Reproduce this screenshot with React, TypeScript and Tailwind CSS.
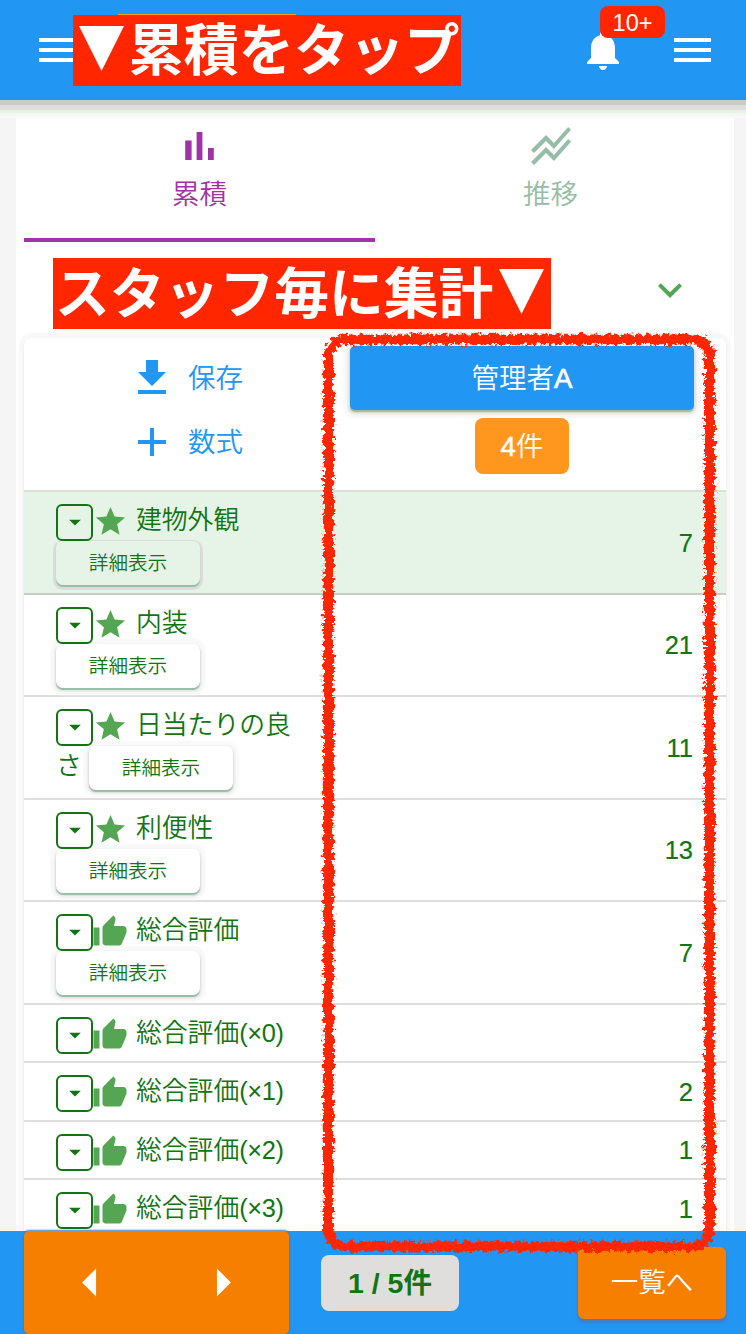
import React from 'react';

const P = {
  menu: 'M3 18h18.5v-2H3v2zm0-5h18.5v-2H3v2zm0-7v2h18.5V6H3z',
  bell: 'M12 22c1.1 0 2-.9 2-2h-4c0 1.1.89 2 2 2zm6-6v-5c0-3.07-1.64-5.64-4.5-6.32V4c0-.83-.67-1.5-1.5-1.5s-1.5.67-1.5 1.5v.68C7.63 5.36 6 7.92 6 11v5l-2 2v1h16v-1l-2-2z',
  bars: 'M4.6 9.2h3.2V19H4.6zM10.3 5h2.9v14h-2.9zM16 13h2.9v6H16z',
  lines: 'M2 19.99l7.5-7.51 4 4 7.09-7.97L22 9.92l-8.5 9.56-4-4-6 6.01-1.5-1.5zm1.5-4.5l6-6.01 4 4L22 3.92l-1.41-1.41-7.09 7.97-4-4L2 13.99l1.5 1.5z',
  more: 'M16.59 8.59L12 13.17 7.41 8.59 6 10l6 6 6-6z',
  download: 'M5 20h14v-2H5v2zM19 9h-4V3H9v6H5l7 7 7-7z',
  add: 'M19 13h-6v6h-2v-6H5v-2h6V5h2v6h6v2z',
  star: 'M12 17.27L18.18 21l-1.64-7.03L22 9.24l-7.19-.61L12 2 9.19 8.63 2 9.24l5.46 4.73L5.82 21z',
  thumb: 'M1 21h4V9H1v12zm22-11c0-1.1-.9-2-2-2h-6.31l.95-4.57.03-.32c0-.41-.17-.79-.44-1.06L14.17 1 7.59 7.59C7.22 7.95 7 8.45 7 9v10c0 1.1.9 2 2 2h9c.83 0 1.54-.5 1.84-1.22l3.02-7.05c.09-.23.14-.47.14-.73v-2z',
  caret: 'M7 10l5 5 5-5z',
  left: 'M14 7l-5 5 5 5V7z',
  right: 'M10 17l5-5-5-5v10z',
};

function Icon({ d, className }: { d: string; className: string }) {
  return (
    <svg viewBox="0 0 24 24" fill="currentColor" className={`shrink-0 ${className}`}>
      <path d={d} />
    </svg>
  );
}

function Triangle() {
  return (
    <span className="relative inline-block h-[55px] w-[55.4px] text-transparent">
      ▼
      <svg viewBox="0 0 45 45" className="absolute left-[6px] top-[11px] size-[45px]" fill="white">
        <path d="M0 0h45L22.5 45z" />
      </svg>
    </span>
  );
}

type Row = { label: string; suffix?: string; rest?: string; icon: 'star' | 'thumb'; value: string; detail?: boolean; height: string };

const rows: Row[] = [
  { label: '建物外観', icon: 'star', value: '7', detail: true, height: 'h-[103px] bg-[#e6f4e7] border-[#c6cec6]' },
  { label: '内装', icon: 'star', value: '21', detail: true, height: 'h-[102px] border-[#e0dedd]' },
  { label: '日当たりの良', rest: 'さ', icon: 'star', value: '11', detail: true, height: 'h-[103px] border-[#e0dedd]' },
  { label: '利便性', icon: 'star', value: '13', detail: true, height: 'h-[102px] border-[#e0dedd]' },
  { label: '総合評価', icon: 'thumb', value: '7', detail: true, height: 'h-[103px] border-[#e0dedd]' },
  { label: '総合評価', suffix: '(×0)', icon: 'thumb', value: '', height: 'h-[58px] border-[#e0dedd]' },
  { label: '総合評価', suffix: '(×1)', icon: 'thumb', value: '2', height: 'h-[59px] border-[#e0dedd]' },
  { label: '総合評価', suffix: '(×2)', icon: 'thumb', value: '1', height: 'h-[58px] border-[#e0dedd]' },
  { label: '総合評価', suffix: '(×3)', icon: 'thumb', value: '1', height: 'h-[59px] border-[#e0dedd]' },
];

function DataRow({ row, highlighted }: { row: Row; highlighted: boolean }) {
  return (
    <div className={`flex shrink-0 border-b-2 pl-8 pr-[33px] ${row.height}`}>
      <div className="flex w-[300px] flex-col pt-3">
        <div className="relative z-[1] flex h-[37px] shrink-0">
          <button className="flex size-[37px] shrink-0 items-center justify-center rounded-[6px] border-2 border-[#137413]">
            <Icon d={P.caret} className="mb-px size-7" />
          </button>
          <span className="flex w-[43px] shrink-0 text-[#55a653]">
            {row.icon === 'star' ? <Icon d={P.star} className="size-[35px]" /> : <Icon d={P.thumb} className="-ml-px size-9" />}
          </span>
          <span className="whitespace-nowrap text-[25.8px] leading-[33px]">
            {row.label}
            {row.suffix && <span className="text-[25.4px] tracking-[-0.4px]">{row.suffix}</span>}
          </span>
        </div>
        {row.detail && (
          <div className="flex h-11">
            {row.rest && <span className="w-[33px] shrink-0 text-[25.8px] leading-[41px]">{row.rest}</span>}
            <button
              className={`h-11 w-36 rounded-[7px] text-[19.6px] leading-[43px] ${
                highlighted
                  ? 'bg-[#e6f4e7] shadow-[0_2px_1px_#96bda5,0_2px_1px_3px_#dcdbda]'
                  : 'bg-white shadow-[0_2px_1px_#98bea5,0_2px_3px_1px_#dedddc,0_1px_2px_6px_#f9f9f9]'
              }`}
            >
              詳細表示
            </button>
          </div>
        )}
      </div>
      <div className="flex flex-1 items-center justify-end pt-[2px] text-[25.5px] font-normal leading-none [-webkit-text-stroke:0.2px_#137413]">
        {row.value}
      </div>
    </div>
  );
}

function MarkerFrame() {
  return (
    <svg className="pointer-events-none absolute left-0 top-0 z-20 h-[1334px] w-[746px]" viewBox="0 0 746 1334" fill="none" stroke="#ff2600">
      <defs>
        <filter id="rough" x="300" y="315" width="440" height="960" filterUnits="userSpaceOnUse">
          <feTurbulence type="fractalNoise" baseFrequency="0.22" numOctaves="3" seed="4" result="n" />
          <feDisplacementMap in="SourceGraphic" in2="n" scale="8" xChannelSelector="R" yChannelSelector="G" />
        </filter>
      </defs>
      <g filter="url(#rough)">
        <rect x="328.5" y="339.5" width="381" height="907" rx="17" strokeWidth="9" />
        <rect x="328.5" y="339.5" width="381" height="907" rx="17" strokeWidth="11.5" strokeDasharray="2 3 1 2 4 3" />
      </g>
    </svg>
  );
}

export default function App() {
  return (
    <div className="relative flex h-[1334px] w-[746px] flex-col overflow-hidden bg-[#f5f5f5] font-['Liberation_Sans','Noto_Sans_CJK_JP',sans-serif] [font-weight:350] text-[#137413]">
      <header className="relative z-10 flex h-[100px] shrink-0 items-center bg-[#2196f3] pl-[33px] text-white shadow-[0_5px_0_#c6cec6,0_10px_1px_#e0dedd,0_13px_1px_#e6f4e7,0_18px_3px_#f7f7f7]">
        <Icon d={P.menu} className="size-12" />
        <span className="absolute left-[118px] top-[14px] h-4 w-[178px] bg-[#ff961e]" />
        <div className="absolute left-[73px] top-[15px] flex h-[71px] w-[388px] whitespace-nowrap bg-[#ff2600] text-[55.2px] font-bold leading-[72px]">
          <Triangle />
          <span>累積をタップ</span>
        </div>
        <div className="relative ml-[498px] size-12">
          <Icon d={P.bell} className="size-12" />
          <span className="absolute -top-5 left-[21px] h-8 w-[65px] rounded-lg bg-[#ff2600] text-center text-[23.5px] leading-[35px]">10+</span>
        </div>
        <Icon d={P.menu} className="ml-[41px] size-12" />
      </header>

      <main className="ml-4 flex w-[718px] flex-1 flex-col overflow-hidden bg-white px-2">
        <nav className="flex h-[142px] shrink-0 text-center text-[27.5px] leading-[50px]">
          <div className="flex w-[351px] flex-col items-center border-b-4 border-[#9f32a6] pt-[22px] text-[#9f32a6]">
            <Icon d={P.bars} className="size-12" />
            <span>累積</span>
          </div>
          <div className="flex w-[351px] flex-col items-center pt-[22px] text-[#96bda5]">
            <Icon d={P.lines} className="size-12" />
            <span>推移</span>
          </div>
        </nav>

        <div className="flex h-24 shrink-0 items-start pl-[29px] pt-4">
          <div className="flex h-[71px] w-[498px] whitespace-nowrap bg-[#ff2600] pl-[2px] text-[54.8px] font-bold leading-[72px] text-white">
            <span>スタッフ毎に集計</span>
            <Triangle />
          </div>
          <Icon d={P.more} className="ml-[95px] mt-2 size-12 text-[#55a653]" />
        </div>

        <section className="flex flex-1 flex-col rounded-t-lg bg-white shadow-[0_2px_2px_#dcdedc,0_0_2px_5px_#f8f8f8]">
          <div className="flex h-[154px] shrink-0 border-b-2 border-[#e0dedd]">
            <div className="flex w-[326px] flex-col pl-[104px] pt-2 text-[27.5px] text-[#2196f3]">
              <button className="flex h-16 items-center gap-3">
                <Icon d={P.download} className="size-12" />
                <span className="pt-[2px] leading-[62px]">保存</span>
              </button>
              <button className="flex h-16 items-center gap-3">
                <Icon d={P.add} className="size-12" />
                <span className="pt-[2px] leading-[62px]">数式</span>
              </button>
            </div>
            <div className="flex w-[344px] flex-col items-center gap-2 pt-2 text-white">
              <button className="h-16 w-full rounded-[5px] bg-[#2196f3] pt-px text-[27.5px] leading-[63px] shadow-[0_2px_1px_#98bea5,0_2px_3px_2px_#dedddc,0_1px_2px_7px_#f9f9f9]">
                管理者<span className="[-webkit-text-stroke:0.7px_white]">A</span>
              </button>
              <span className="h-14 w-[94px] rounded-lg bg-[#ff961e] text-center text-[27.5px] leading-[57px]">
                <span className="[-webkit-text-stroke:0.5px_white]">4</span>件
              </span>
            </div>
          </div>
          {rows.map((row, i) => (
            <DataRow key={row.label + (row.suffix ?? '')} row={row} highlighted={i === 0} />
          ))}
        </section>
      </main>

      <footer className="relative flex h-[103px] shrink-0 bg-[#2196f3] pl-6">
        <div className="flex h-[103px] w-[265px] items-center rounded-[5px] bg-[#f67f00] text-white shadow-[0_0_2px_1px_#3d80c8]">
          <Icon d={P.left} className="ml-[33px] size-[67px]" />
          <Icon d={P.right} className="ml-[65px] size-[67px]" />
        </div>
        <div className="ml-8 mt-6 h-14 w-[138px] whitespace-nowrap rounded-lg bg-[#e0dedd] text-center text-[28.5px] font-bold leading-[57px]">1 / 5件</div>
        <button className="ml-[119px] mt-4 h-[72px] w-[148px] rounded-[6px] bg-[#f67f00] text-[27.5px] leading-[72px] text-white shadow-[0_3px_2px_1px_#3d80c8]">一覧へ</button>
      </footer>
      <MarkerFrame />
    </div>
  );
}
